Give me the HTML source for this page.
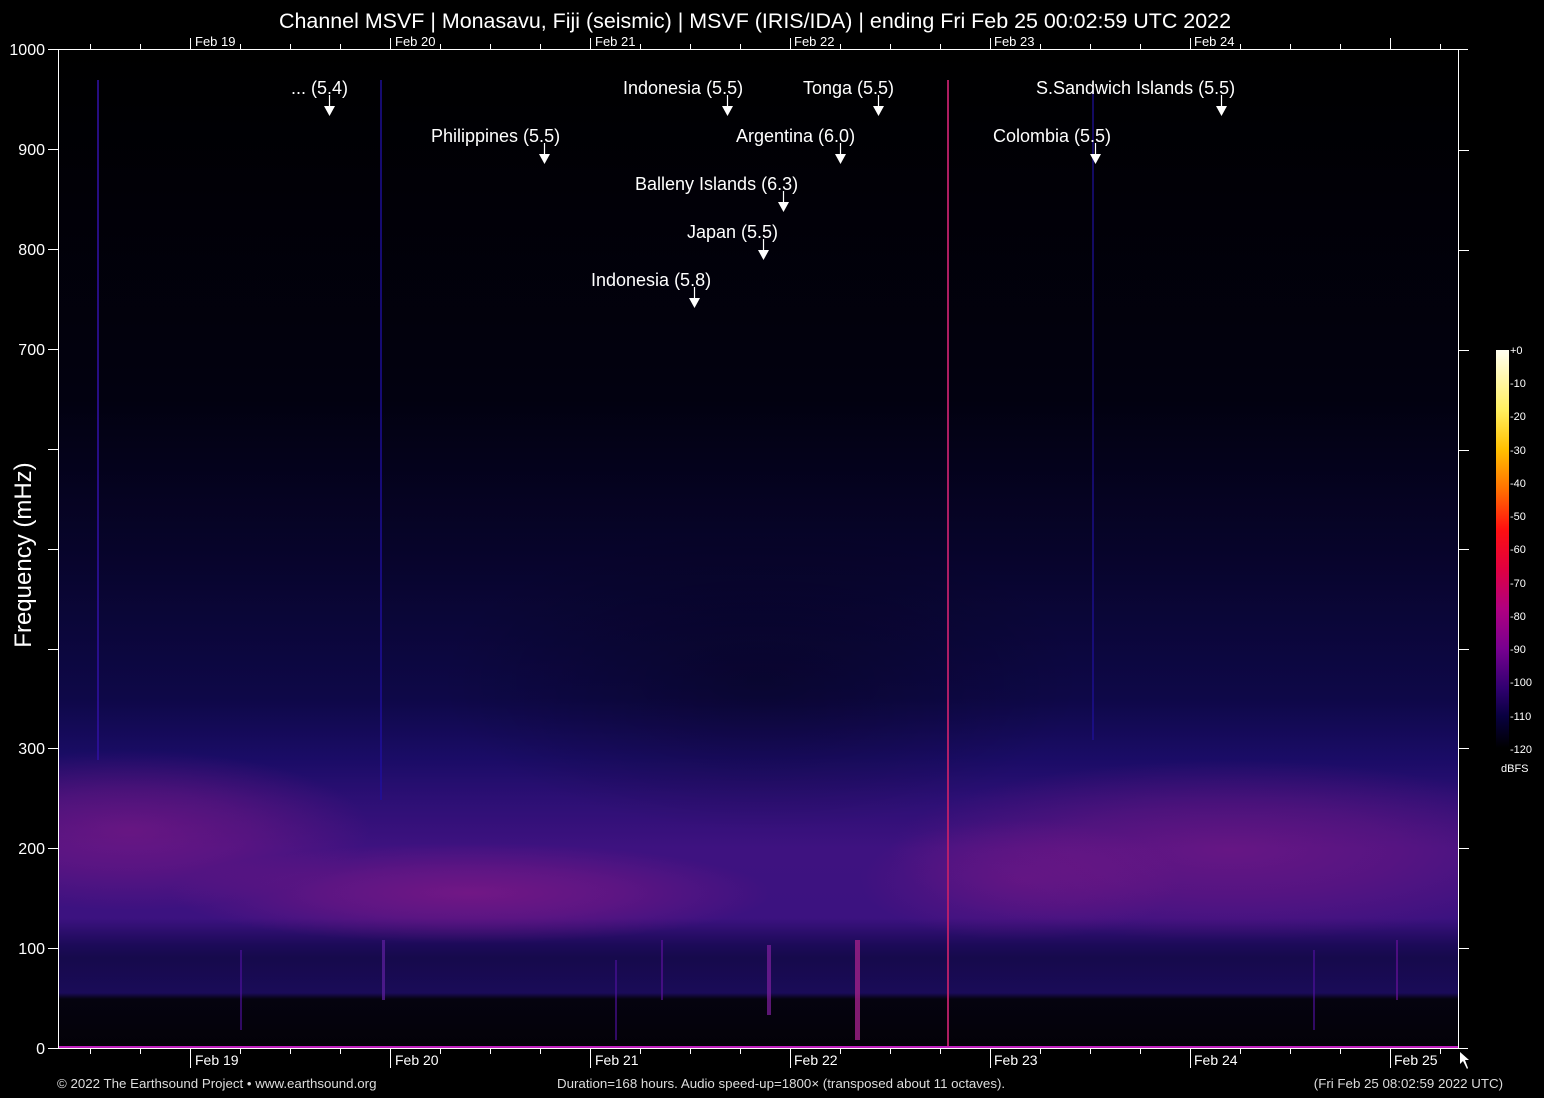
<!DOCTYPE html>
<html><head><meta charset="utf-8"><style>
html,body{margin:0;padding:0;background:#000;}
svg{display:block;}
text{font-family:"Liberation Sans",Arial,sans-serif;fill:#fff;}
.mono{font-family:"DejaVu Sans Mono","Liberation Mono",monospace;fill:#ccc;font-size:11px;}
</style></head><body>
<svg width="1544" height="1098" viewBox="0 0 1544 1098" xmlns="http://www.w3.org/2000/svg">
<defs>
<linearGradient id="base" x1="0" y1="49" x2="0" y2="1048" gradientUnits="userSpaceOnUse">
<stop offset="0" stop-color="#000000"/>
<stop offset="0.35" stop-color="#020110"/>
<stop offset="0.5" stop-color="#07042a"/>
<stop offset="0.65" stop-color="#0e0848"/>
<stop offset="0.71" stop-color="#1a0c66"/>
<stop offset="0.75" stop-color="#2c0f74"/>
<stop offset="0.80" stop-color="#3e1280"/>
<stop offset="0.87" stop-color="#3c1280"/>
<stop offset="0.897" stop-color="#1c0a58"/>
<stop offset="0.91" stop-color="#160a4c"/>
<stop offset="0.945" stop-color="#1a0b58"/>
<stop offset="0.951" stop-color="#05030f"/>
<stop offset="1" stop-color="#030108"/>
</linearGradient>
<radialGradient id="mg">
<stop offset="0" stop-color="#8e1a88" stop-opacity="1"/>
<stop offset="0.5" stop-color="#8e1a88" stop-opacity="0.6"/>
<stop offset="1" stop-color="#8e1a88" stop-opacity="0"/>
</radialGradient>
<radialGradient id="dk">
<stop offset="0" stop-color="#000" stop-opacity="1"/>
<stop offset="1" stop-color="#000" stop-opacity="0"/>
</radialGradient>
<linearGradient id="cb" x1="0" y1="0" x2="0" y2="1">
<stop offset="0" stop-color="#fffff0"/>
<stop offset="0.15" stop-color="#fff060"/>
<stop offset="0.25" stop-color="#ffc000"/>
<stop offset="0.35" stop-color="#ff7000"/>
<stop offset="0.45" stop-color="#ff1010"/>
<stop offset="0.55" stop-color="#e00040"/>
<stop offset="0.65" stop-color="#b00080"/>
<stop offset="0.75" stop-color="#780090"/>
<stop offset="0.85" stop-color="#300070"/>
<stop offset="0.92" stop-color="#080040"/>
<stop offset="1" stop-color="#000000"/>
</linearGradient>
<clipPath id="plot"><rect x="58" y="49" width="1400" height="999"/></clipPath>
</defs>

<g clip-path="url(#plot)">
<rect x="58" y="49" width="1400" height="999" fill="url(#base)"/>
<ellipse cx="130" cy="830" rx="240" ry="80" fill="url(#mg)" opacity="0.55"/>
<ellipse cx="470" cy="893" rx="300" ry="50" fill="url(#mg)" opacity="0.65"/>
<ellipse cx="1230" cy="850" rx="340" ry="90" fill="url(#mg)" opacity="0.5"/>
<ellipse cx="1020" cy="880" rx="160" ry="60" fill="url(#mg)" opacity="0.35"/>
<ellipse cx="760" cy="680" rx="320" ry="150" fill="url(#dk)" opacity="0.3"/>
<rect x="947" y="80" width="2" height="966" fill="#c0206a" opacity="0.9"/>
<rect x="97" y="80" width="2" height="680" fill="#3010a0" opacity="0.8"/>
<rect x="380" y="80" width="2" height="720" fill="#2010a0" opacity="0.7"/>
<rect x="1092" y="90" width="2" height="650" fill="#2010a0" opacity="0.6"/>
<rect x="855" y="940" width="5" height="100" fill="#a02088" opacity="0.8"/>
<rect x="767" y="945" width="4" height="70" fill="#8020a0" opacity="0.7"/>
<rect x="382" y="940" width="3" height="60" fill="#6020a0" opacity="0.7"/>
<rect x="240" y="950" width="2" height="80" fill="#5010a0" opacity="0.6"/>
<rect x="615" y="960" width="2" height="80" fill="#5010a0" opacity="0.6"/>
<rect x="661" y="940" width="2" height="60" fill="#6010a0" opacity="0.6"/>
<rect x="1396" y="940" width="2" height="60" fill="#7010a0" opacity="0.6"/>
<rect x="1313" y="950" width="2" height="80" fill="#5010a0" opacity="0.6"/>
<rect x="58" y="1046" width="1400" height="2" fill="#c020c0"/>
</g>

<g stroke="#fff" stroke-width="1" fill="none">
<line x1="58" y1="49.5" x2="1468" y2="49.5"/>
<line x1="58" y1="1048.5" x2="1468" y2="1048.5"/>
<line x1="58.5" y1="49" x2="58.5" y2="1048"/>
<line x1="1458.5" y1="49" x2="1458.5" y2="1048"/>
</g>
<g stroke="#fff" stroke-width="1">
<path d="M90.5 44V49M140.5 44V49M190.5 38V49M240.5 44V49M290.5 44V49M340.5 44V49M390.5 38V49M440.5 44V49M490.5 44V49M540.5 44V49M590.5 38V49M640.5 44V49M690.5 44V49M740.5 44V49M790.5 38V49M840.5 44V49M890.5 44V49M940.5 44V49M990.5 38V49M1040.5 44V49M1090.5 44V49M1140.5 44V49M1190.5 38V49M1240.5 44V49M1290.5 44V49M1340.5 44V49M1390.5 38V49M1440.5 44V49"/>
<path d="M90.5 1049V1054M140.5 1049V1054M190.5 1049V1068M240.5 1049V1054M290.5 1049V1054M340.5 1049V1054M390.5 1049V1068M440.5 1049V1054M490.5 1049V1054M540.5 1049V1054M590.5 1049V1068M640.5 1049V1054M690.5 1049V1054M740.5 1049V1054M790.5 1049V1068M840.5 1049V1054M890.5 1049V1054M940.5 1049V1054M990.5 1049V1068M1040.5 1049V1054M1090.5 1049V1054M1140.5 1049V1054M1190.5 1049V1068M1240.5 1049V1054M1290.5 1049V1054M1340.5 1049V1054M1390.5 1049V1068M1440.5 1049V1054"/>
<path d="M48 49.5H58M48 149.5H58M48 249.5H58M48 349.5H58M48 449.5H58M48 549.5H58M48 649.5H58M48 748.5H58M48 848.5H58M48 948.5H58M48 1048.5H58"/>
<path d="M1458 150.5H1469M1458 250.5H1469M1458 350.5H1469M1458 450.5H1469M1458 549.5H1469M1458 649.5H1469M1458 748.5H1469M1458 848.5H1469M1458 948.5H1469"/>
</g>

<text x="755" y="28" font-size="21.5" text-anchor="middle" textLength="952" lengthAdjust="spacingAndGlyphs">Channel MSVF | Monasavu, Fiji (seismic) | MSVF (IRIS/IDA) | ending Fri Feb 25 00:02:59 UTC 2022</text>

<g font-size="13">
<text x="195" y="46">Feb 19</text><text x="395" y="46">Feb 20</text><text x="595" y="46">Feb 21</text>
<text x="794" y="46">Feb 22</text><text x="994" y="46">Feb 23</text><text x="1194" y="46">Feb 24</text>
</g>
<g font-size="14">
<text x="195" y="1065">Feb 19</text><text x="395" y="1065">Feb 20</text><text x="595" y="1065">Feb 21</text>
<text x="794" y="1065">Feb 22</text><text x="994" y="1065">Feb 23</text><text x="1194" y="1065">Feb 24</text><text x="1394" y="1065">Feb 25</text>
</g>

<g font-size="16" text-anchor="end">
<text x="45" y="55">1000</text><text x="45" y="155">900</text><text x="45" y="255">800</text><text x="45" y="355">700</text>
<text x="45" y="754">300</text><text x="45" y="854">200</text><text x="45" y="954">100</text><text x="45" y="1054">0</text>
</g>
<text transform="translate(31,555) rotate(-90)" font-size="24" text-anchor="middle">Frequency (mHz)</text>

<g font-size="18">
<text x="291" y="94">... (5.4)</text>
<text x="623" y="94">Indonesia (5.5)</text>
<text x="803" y="94">Tonga (5.5)</text>
<text x="1036" y="94">S.Sandwich Islands (5.5)</text>
<text x="431" y="142">Philippines (5.5)</text>
<text x="736" y="142">Argentina (6.0)</text>
<text x="993" y="142">Colombia (5.5)</text>
<text x="635" y="190">Balleny Islands (6.3)</text>
<text x="687" y="238">Japan (5.5)</text>
<text x="591" y="286">Indonesia (5.8)</text>
</g>
<g stroke="#fff" stroke-width="1.2">
<path d="M329.5 95V107M727.5 95V107M878.5 95V107M1221.5 95V107M544.5 143V155M840.5 143V155M1095.5 143V155M783.5 191V203M763.5 239V251M694.5 287V299"/>
</g>
<g fill="#fff">
<path d="M324 106h11l-5.5 10z"/><path d="M722 106h11l-5.5 10z"/><path d="M873 106h11l-5.5 10z"/><path d="M1216 106h11l-5.5 10z"/>
<path d="M539 154h11l-5.5 10z"/><path d="M835 154h11l-5.5 10z"/><path d="M1090 154h11l-5.5 10z"/>
<path d="M778 202h11l-5.5 10z"/><path d="M758 250h11l-5.5 10z"/><path d="M689 298h11l-5.5 10z"/>
</g>

<rect x="1496" y="350" width="13" height="398" fill="url(#cb)"/>
<g class="mono">
<text x="1510" y="354">+0</text><text x="1510" y="387">-10</text><text x="1510" y="420">-20</text><text x="1510" y="454">-30</text>
<text x="1510" y="487">-40</text><text x="1510" y="520">-50</text><text x="1510" y="553">-60</text><text x="1510" y="587">-70</text>
<text x="1510" y="620">-80</text><text x="1510" y="653">-90</text><text x="1510" y="686">-100</text><text x="1510" y="720">-110</text>
<text x="1510" y="753">-120</text><text x="1501" y="772">dBFS</text>
</g>

<path d="M1460 1052 L1460 1064 L1463 1061 L1467 1069 L1468 1068 L1465 1060 L1469 1060 Z" fill="#fff"/>

<g font-size="13.3">
<text x="57" y="1088" style="fill:#ddd">© 2022 The Earthsound Project • www.earthsound.org</text>
<text x="557" y="1088" style="fill:#ddd">Duration=168 hours. Audio speed-up=1800× (transposed about 11 octaves).</text>
<text x="1503" y="1088" text-anchor="end" style="fill:#ddd">(Fri Feb 25 08:02:59 2022 UTC)</text>
</g>
</svg>
</body></html>
